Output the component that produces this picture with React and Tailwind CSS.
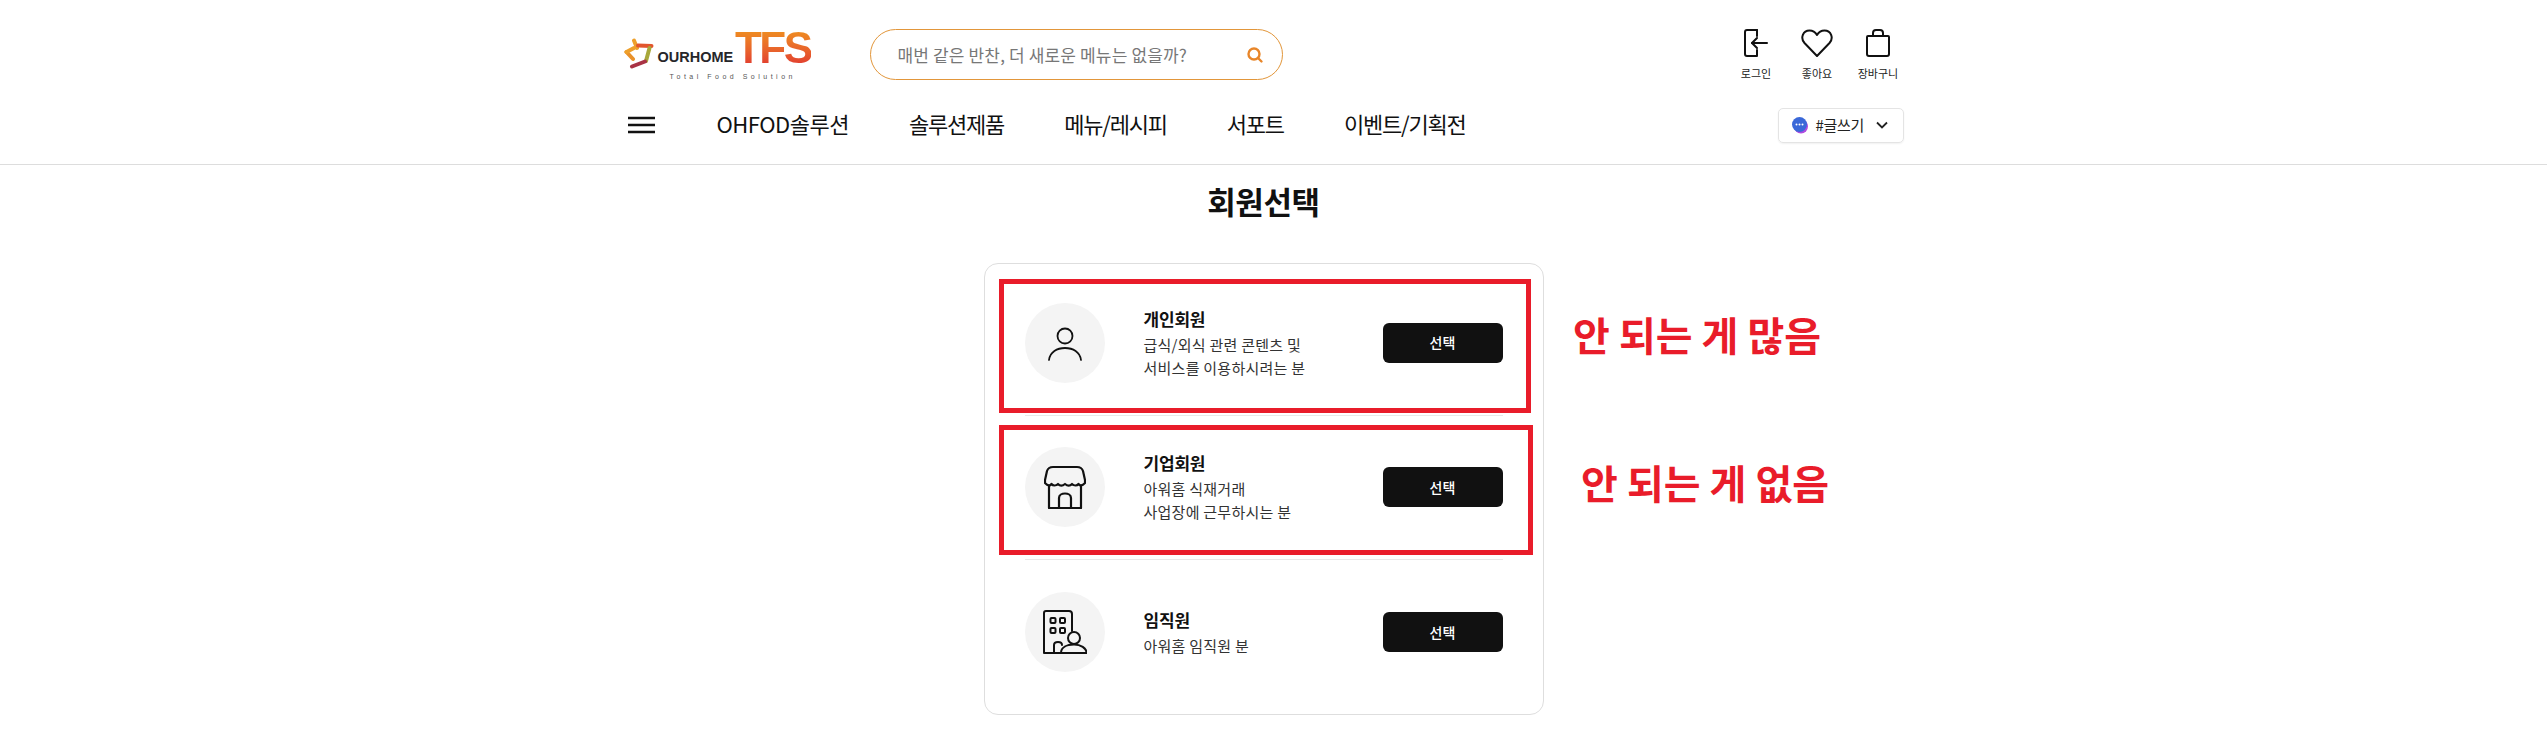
import React from "react";

const F = { fontFamily: '"Noto Sans CJK KR", "Noto Sans", sans-serif' };

function Star() {
  return (
    <svg width="30" height="31" viewBox="0 0 30 31" className="shrink-0">
      <g fill="none" strokeWidth="4" strokeLinecap="round">
        <path d="M10 2.500 L13 10" stroke="#eea02b" />
        <path d="M14 7.500 L27.500 8" stroke="#e2552d" />
        <path d="M25.500 10 L22 23" stroke="#a8a83a" />
        <path d="M21 23.500 L8 28.500" stroke="#a93345" />
        <path d="M2.500 14 L9 21" stroke="#e9912a" />
        <path d="M2.500 14 L10 10" stroke="#eea02b" />
      </g>
    </svg>
  );
}

function Logo() {
  return (
    <div className="w-[187px] h-[52px] shrink-0 flex flex-col">
      <div className="flex items-start h-[35px] pt-[3px]">
        <div className="pt-[6px]"><Star /></div>
        <div className="ml-[4px] mt-[19px] w-[79px] text-[14.5px] leading-[12px] font-bold text-[#26262a] whitespace-nowrap" style={{ fontFamily: '"Liberation Sans", sans-serif' }}>OURHOME</div>
        <div className="text-[44px] leading-[32px] font-bold tracking-[-2.5px] bg-gradient-to-b from-[#ee8a21] to-[#e23f2f] bg-clip-text text-transparent" style={{ fontFamily: '"Liberation Sans", sans-serif' }}>TFS</div>
      </div>
      <div className="ml-[38px] h-[1px] mt-[4px] bg-[#e3e3e3] w-[147px]" />
      <div className="ml-[46px] mt-[5px] text-[7px] leading-[8px] tracking-[3.5px] text-[#555] whitespace-nowrap" style={{ fontFamily: '"Liberation Sans", sans-serif' }}>Total Food Solution</div>
    </div>
  );
}

function IconItem({ label, children }) {
  return (
    <div className="w-[61px] flex flex-col items-center">
      <div className="h-[28px] flex items-center justify-center">{children}</div>
      <div className="mt-[9px] text-[11px] leading-[14px] text-[#222]">{label}</div>
    </div>
  );
}

function RowIcon({ type }) {
  if (type === "person")
    return (
      <svg width="36" height="36" viewBox="0 0 36 36" fill="none" stroke="#111" strokeWidth="1.8" strokeLinecap="round">
        <circle cx="18" cy="11" r="7.500" />
        <path d="M2 35 C3 27 10 23 18 23 C26 23 33 27 34 35" />
      </svg>
    );
  if (type === "shop")
    return (
      <svg width="42" height="44" viewBox="0 0 42 44" fill="none" stroke="#111" strokeWidth="2.2" strokeLinejoin="round" strokeLinecap="round">
        <path d="M9 2 H33 C36 2 38 3 39 6 L41 15 V18 C38 21 36 21 34.500 19 C33 21 30 21 28 19 C26 21 23.500 21 21 19 C18.500 21 16 21 14 19 C12 21 9 21 7.500 19 C6 21 4 21 1 18 V15 L3 6 C4 3 6 2 9 2 Z" />
        <path d="M5 21 V43 H37 V21" />
        <path d="M15 43 V33 C15 27 27 27 27 33 V43" />
      </svg>
    );
  return (
    <svg width="44" height="44" viewBox="0 0 44 44" fill="none" stroke="#111" strokeWidth="2" strokeLinejoin="round" strokeLinecap="round">
      <path d="M22 43 H1 V3 C1 2 2 1 3 1 H26 C28 1 29 2 29 4 V21" />
      <rect x="7.500" y="8" width="5" height="5" rx="1" />
      <rect x="17" y="8" width="5" height="5" rx="1" />
      <rect x="7.500" y="18" width="5" height="5" rx="1" />
      <rect x="17" y="18" width="5" height="5" rx="1" />
      <path d="M11 43 V35 C11 31 19 31 19 35" />
      <circle cx="31" cy="28" r="6" />
      <path d="M18 43 C18 37 24 34.500 31 34.500 C38 34.500 43 38 44 43 Z" />
    </svg>
  );
}

function Row({ icon, title, lines, last }) {
  return (
    <div className={"h-[144.5px] mx-[40px] flex items-center " + (last ? "" : "border-b border-[#e8e8e8]")}>
      <div className="w-[80px] h-[80px] rounded-full bg-[#f4f4f4] flex items-center justify-center shrink-0">
        <RowIcon type={icon} />
      </div>
      <div className="ml-[39px] flex-1">
        <div className="mb-[2px] text-[17px] leading-[24px] font-bold tracking-[-0.2px] text-[#111]">{title}</div>
        {lines.map((l) => (
          <div key={l} className="text-[15px] leading-[23px] text-[#333] tracking-[0.25px]">{l}</div>
        ))}
      </div>
      <button className="w-[120px] h-[40px] rounded-[6px] bg-[#111] text-white text-[14px] font-medium">선택</button>
    </div>
  );
}

export default function App() {
  return (
    <div className="relative bg-white w-full h-[751px] overflow-hidden" style={F}>
      <header className="h-[165px] border-b border-[#dddddd] pr-[20px]">
        <div className="mx-auto w-[1280px]">
          <div className="flex items-start pt-[29px] h-[81px]">
            <Logo />
            <div className="ml-[59px] w-[413px] h-[51px] rounded-full border border-[#e2963a] flex items-center justify-between pl-[27px] pr-[18px]">
              <span className="text-[17px] tracking-[0.15px] text-[#777]">매번 같은 반찬, 더 새로운 메뉴는 없을까?</span>
              <svg width="18" height="18" viewBox="0 0 18 18" fill="none" stroke="#e8862a" strokeWidth="2.400" strokeLinecap="round">
                <circle cx="8" cy="8" r="5.500" />
                <path d="M12.500 12.500 L15.500 15.500" />
              </svg>
            </div>
            <div className="ml-auto -mr-[5px] flex">
              <IconItem label="로그인">
                <svg width="24" height="28" viewBox="0 0 24 28" fill="none" stroke="#111" strokeWidth="2" strokeLinecap="round" strokeLinejoin="round">
                  <path d="M13 1 H3 C2 1 1 2 1 3 V25 C1 26 2 27 3 27 H13 V21" />
                  <path d="M13 1 V7" />
                  <path d="M23 14 H8" />
                  <path d="M13 9 L8 14 L13 19" />
                </svg>
              </IconItem>
              <IconItem label="좋아요">
                <svg width="32" height="28" viewBox="0 0 32 28" fill="none" stroke="#111" strokeWidth="2" strokeLinejoin="round">
                  <path d="M16 27 L3.500 14 C-1 9 2 1.500 8.500 1.500 C12 1.500 14.500 3.500 16 6 C17.500 3.500 20 1.500 23.500 1.500 C30 1.500 33 9 28.500 14 Z" />
                </svg>
              </IconItem>
              <IconItem label="장바구니">
                <svg width="24" height="28" viewBox="0 0 24 28" fill="none" stroke="#111" strokeWidth="2" strokeLinejoin="round">
                  <path d="M2 7 H22 C22.500 7 23 7.500 23 8 V25 C23 26 22 27 21 27 H3 C2 27 1 26 1 25 V8 C1 7.500 1.500 7 2 7 Z" />
                  <path d="M7 7 V4 C7 2 8 1 10 1 H14 C16 1 17 2 17 4 V7" />
                </svg>
              </IconItem>
            </div>
          </div>
          <nav className="h-[78px] mt-[5px] flex items-center relative">
            <svg width="27" height="18" viewBox="0 0 27 18" className="ml-[4px] shrink-0" stroke="#111" strokeWidth="2.600">
              <path d="M0 2 H27 M0 9 H27 M0 16 H27" />
            </svg>
            <div className="ml-[62px] -mt-[3px] flex gap-[60px] text-[22px] tracking-[-1.2px] text-[#111]">
              <span className="tracking-[-0.5px]">OHFOD솔루션</span>
              <span>솔루션제품</span>
              <span>메뉴/레시피</span>
              <span>서포트</span>
              <span>이벤트/기획전</span>
            </div>
            <div className="ml-auto w-[126px] h-[35px] rounded-[5px] border border-[#e4e4e4] flex items-center pl-[12px] text-[15px] text-[#222] shadow-[0_1px_2px_rgba(0,0,0,0.06)]">
              <svg width="18" height="19" viewBox="0 0 18 19" className="shrink-0">
                <circle cx="10" cy="10.500" r="7" fill="#b04ae0" />
                <circle cx="8.500" cy="8.500" r="7.500" fill="#3a68d8" />
                <circle cx="5.500" cy="8.500" r="1" fill="#fff" />
                <circle cx="8.500" cy="8.500" r="1" fill="#fff" />
                <circle cx="11.500" cy="8.500" r="1" fill="#fff" />
              </svg>
              <span className="ml-[7px] tracking-[-0.3px]">#글쓰기</span>
              <svg width="12" height="8" viewBox="0 0 12 8" fill="none" stroke="#222" strokeWidth="1.800" className="ml-[12px] shrink-0">
                <path d="M1 1.500 L6 6.500 L11 1.500" />
              </svg>
            </div>
          </nav>
        </div>
      </header>

      <main className="pr-[20px]">
        <h1 className="mt-[16px] text-center text-[31px] leading-[40px] font-bold text-[#111] tracking-[-0.4px]">회원선택</h1>
        <div className="mx-auto mt-[42px] w-[560px] h-[452px] rounded-[14px] border border-[#dedede] py-[7px]">
          <Row icon="person" title="개인회원" lines={["급식/외식 관련 콘텐츠 및", "서비스를 이용하시려는 분"]} />
          <Row icon="shop" title="기업회원" lines={["아워홈 식재거래", "사업장에 근무하시는 분"]} />
          <Row icon="building" title="임직원" lines={["아워홈 임직원 분"]} last />
        </div>
      </main>

      <div className="absolute left-[999px] top-[279px] w-[532px] h-[134px] border-[5px] border-[#e91c2a]" />
      <div className="absolute left-[999px] top-[425px] w-[534px] h-[130px] border-[5px] border-[#e91c2a]" />
      <div className="absolute left-[1573px] top-[308px] text-[40px] leading-[52px] font-bold text-[#e91c2a] whitespace-nowrap">안 되는 게 많음</div>
      <div className="absolute left-[1581px] top-[456px] text-[40px] leading-[52px] font-bold text-[#e91c2a] whitespace-nowrap">안 되는 게 없음</div>
    </div>
  );
}
